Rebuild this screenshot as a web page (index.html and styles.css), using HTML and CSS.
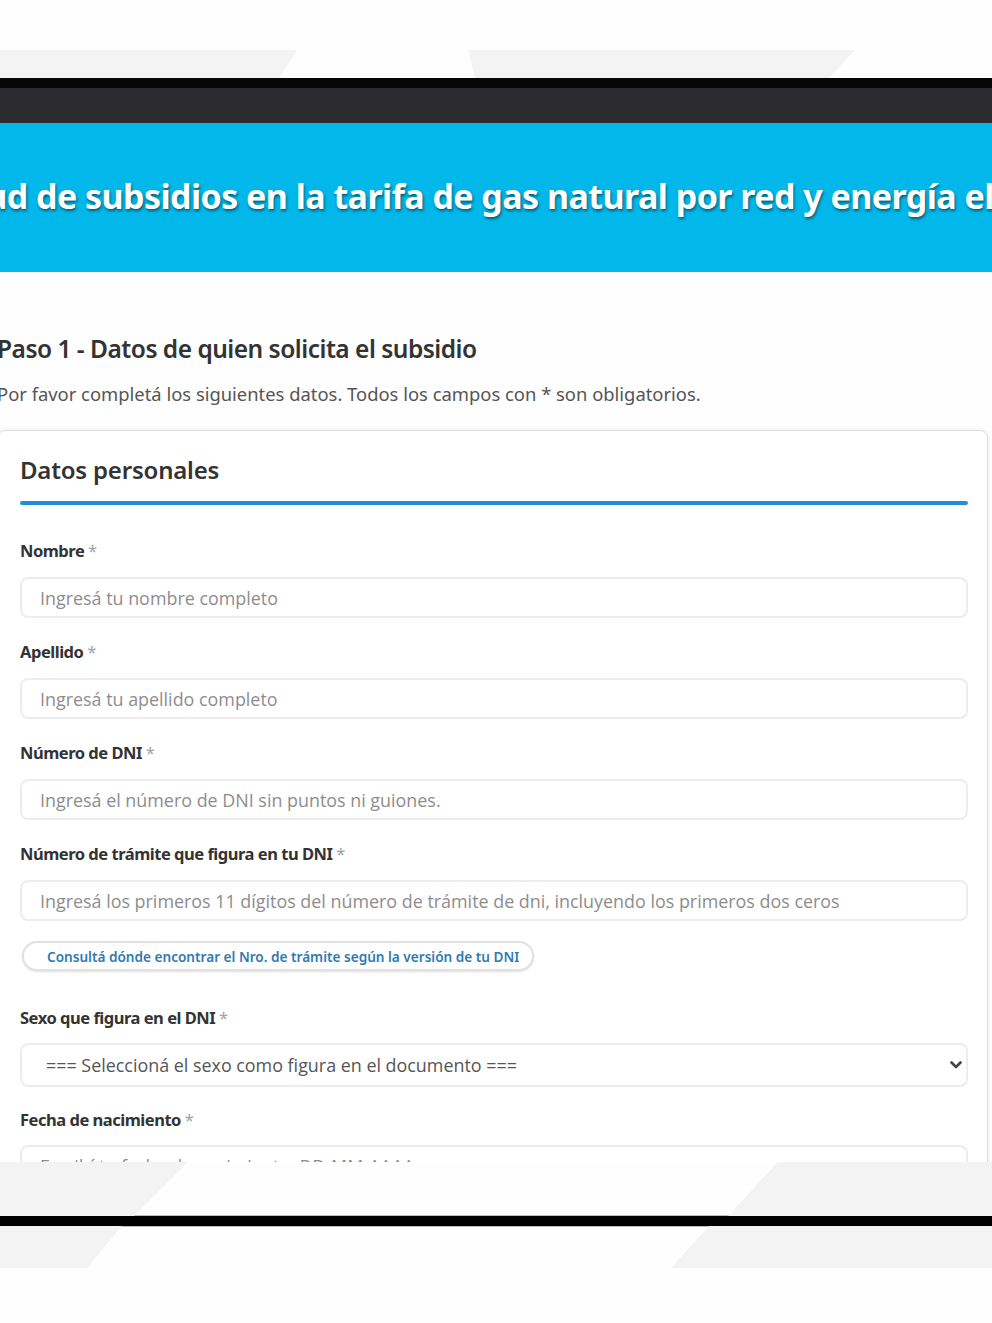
FILE: index.html
```html
<!DOCTYPE html>
<html lang="es">
<head>
<meta charset="utf-8">
<title>Solicitud de subsidios</title>
<link rel="stylesheet" href="styles.css">
</head>
<body>
<div class="top-space"></div>
<div class="deco deco-top">
  <svg width="992" height="28" viewBox="0 0 992 28" aria-hidden="true">
    <polygon points="0,0 297,0 279,28 0,28" />
    <polygon points="468,0 855,0 829,28 475,28" />
  </svg>
</div>
<div class="frame-black"></div>
<div class="browser-bar"></div>
<header class="hero">
  <h1>Solicitud de subsidios en la tarifa de gas natural por red y energía eléctrica</h1>
</header>
<main class="screen">
  <div class="content">
    <h2 class="step-title">Paso 1 - Datos de quien solicita el subsidio</h2>
    <p class="intro">Por favor completá los siguientes datos. Todos los campos con * son obligatorios.</p>
    <section class="card">
      <h3 class="card-title">Datos personales</h3>
      <div class="rule"></div>
      <div class="fields">
        <div class="field">
          <label class="label" for="nombre">Nombre <span class="req">*</span></label>
          <input class="input" id="nombre" type="text" placeholder="Ingresá tu nombre completo">
        </div>
        <div class="field">
          <label class="label" for="apellido">Apellido <span class="req">*</span></label>
          <input class="input" id="apellido" type="text" placeholder="Ingresá tu apellido completo">
        </div>
        <div class="field">
          <label class="label" for="dni">Número de DNI <span class="req">*</span></label>
          <input class="input" id="dni" type="text" placeholder="Ingresá el número de DNI sin puntos ni guiones.">
        </div>
        <div class="field">
          <label class="label" for="tramite">Número de trámite que figura en tu DNI <span class="req">*</span></label>
          <input class="input" id="tramite" type="text" placeholder="Ingresá los primeros 11 dígitos del número de trámite de dni, incluyendo los primeros dos ceros">
        </div>
        <button class="help" type="button">Consultá dónde encontrar el Nro. de trámite según la versión de tu DNI</button>
        <div class="field field-sexo">
          <label class="label" for="sexo">Sexo que figura en el DNI <span class="req">*</span></label>
          <div class="select-wrap">
            <select class="input select" id="sexo">
              <option>=== Seleccioná el sexo como figura en el documento ===</option>
              <option>Femenino</option>
              <option>Masculino</option>
              <option>X</option>
            </select>
            <svg class="chevron" width="12" height="8" viewBox="0 0 12 8" aria-hidden="true">
              <path d="M1.5 1.5 L6 6 L10.5 1.5" />
            </svg>
          </div>
        </div>
        <div class="field field-fecha">
          <label class="label" for="fecha">Fecha de nacimiento <span class="req">*</span></label>
          <input class="input input-fecha" id="fecha" type="text" placeholder="Escribí tu fecha de nacimiento: DD-MM-AAAA">
        </div>
      </div>
    </section>
  </div>
</main>
<div class="deco deco-bottom1">
  <svg width="992" height="54" viewBox="0 0 992 54" aria-hidden="true">
    <polygon points="0,0 188,0 134,54 0,54" />
    <polygon points="778,0 992,0 992,54 728,54" />
  </svg>
</div>
<div class="frame-black frame-black-bottom"></div>
<div class="deco deco-bottom2">
  <svg width="992" height="42" viewBox="0 0 992 42" aria-hidden="true">
    <polygon points="0,0 122,0 87,42 0,42" />
    <polygon points="709,0 992,0 992,42 671,42" />
  </svg>
</div>
</body>
</html>
```

FILE: styles.css
```css
html, body {
  margin: 0;
  padding: 0;
}

body {
  background: #fefefe;
  font-family: "Noto Sans", "Open Sans", sans-serif;
  color: #333;
  overflow-x: hidden;
}

.top-space {
  height: 50px;
}

.deco svg {
  display: block;
}

.deco polygon {
  fill: #f3f3f3;
}

.frame-black {
  height: 10px;
  background: #060606;
}

.frame-black-bottom {
  background: #000;
  box-shadow: 0 -1px 0 #bdbdbd, 0 1px 0 #bdbdbd;
}

.browser-bar {
  height: 35px;
  background: #2c2c2e;
}

.hero {
  height: 149px;
  background: #02b8eb;
  display: flex;
  align-items: center;
  justify-content: center;
  overflow: hidden;
}

.hero h1 {
  flex: none;
  margin: 0 0 4px;
  white-space: nowrap;
  color: #fff;
  font-family: "Noto Sans", sans-serif;
  font-stretch: condensed;
  font-weight: 700;
  font-size: 34px;
  letter-spacing: -0.55px;
  line-height: 1;
  text-shadow: 1px 2px 3px rgba(0, 0, 0, 0.5);
}

.screen {
  height: 890px;
  overflow: hidden;
}

.content {
  margin-left: -3px;
  width: 991px;
  padding-top: 62px;
}

.step-title {
  margin: 0;
  font-family: "Noto Sans", sans-serif;
  font-stretch: condensed;
  font-weight: 600;
  font-size: 24.5px;
  letter-spacing: -0.5px;
  line-height: 30px;
  color: #333;
}

.intro {
  margin: 18px 0 0;
  font-family: "Noto Sans", sans-serif;
  font-stretch: semi-condensed;
  font-size: 18.4px;
  line-height: 24px;
  color: #555;
}

.card {
  margin-top: 24px;
  background: #fff;
  border: 1px solid #dedede;
  border-radius: 8px;
  box-shadow: 0 0 4px rgba(0, 0, 0, 0.08);
  padding: 24px 19px 40px 22px;
}

.card-title {
  margin: 0;
  font-family: "Noto Sans", sans-serif;
  font-stretch: semi-condensed;
  font-weight: 600;
  font-size: 24px;
  letter-spacing: -0.2px;
  line-height: 30px;
  color: #333;
}

.rule {
  height: 4px;
  margin-top: 16px;
  background: #1e8fd8;
  border-radius: 2px;
}

.fields {
  display: flex;
  flex-direction: column;
  margin-top: 36px;
}

.field + .field {
  margin-top: 24px;
}

.label {
  display: block;
  font-family: "Noto Sans", sans-serif;
  font-stretch: semi-condensed;
  font-weight: 700;
  font-size: 16.5px;
  letter-spacing: -0.48px;
  line-height: 20px;
  color: #333;
}

.req {
  color: #9aa3ad;
  font-weight: 400;
}

.input {
  display: block;
  width: 100%;
  box-sizing: border-box;
  height: 41px;
  margin: 16px 0 0;
  border: 2px solid #ededed;
  border-radius: 8px;
  padding: 0 18px;
  background: #fff;
  font-family: "Open Sans", sans-serif;
  font-size: 17.9px;
  color: #555;
  outline: none;
}

.input::placeholder {
  color: #8d8d8d;
}

.help {
  align-self: flex-start;
  margin-top: 20px;
  margin-left: 2px;
  height: 30px;
  border: 2px solid #e1e1e1;
  border-radius: 16px;
  box-shadow: 0 1px 2px rgba(0, 0, 0, 0.12);
  padding: 0 13px 0 23px;
  background: #fff;
  color: #2f7ab3;
  font-family: "Noto Sans", sans-serif;
  font-stretch: condensed;
  font-weight: 600;
  font-size: 13.6px;
  cursor: pointer;
}

.fields .field-sexo {
  margin-top: 37px;
}

.select-wrap {
  position: relative;
  margin-top: 15px;
}

.select {
  margin: 0;
  height: 44px;
  padding: 0 40px 0 24px;
  appearance: none;
  -webkit-appearance: none;
  color: #555;
}

.chevron {
  position: absolute;
  right: 6px;
  top: 18px;
}

.chevron path {
  fill: none;
  stroke: #444;
  stroke-width: 2.6;
  stroke-linecap: round;
  stroke-linejoin: round;
}

.fields .field-fecha {
  margin-top: 23px;
}

.input-fecha {
  margin-top: 15px;
}
```
